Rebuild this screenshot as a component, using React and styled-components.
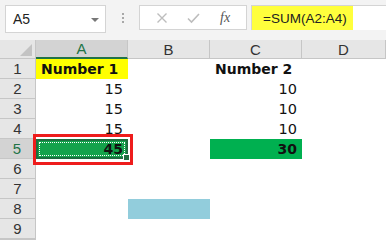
import React from 'react'
import styled, { createGlobalStyle, css } from 'styled-components'

const GlobalStyle = createGlobalStyle`
  body {
    margin: 0;
    background: #ffffff;
    font-family: "Liberation Sans", Arial, sans-serif;
  }
`

const Window = styled.div`
  width: 386px;
  height: 240px;
  overflow: hidden;
  background: #ffffff;
`

const FormulaBar = styled.div`
  display: flex;
  align-items: flex-start;
  height: 40px;
  padding: 5px 0 0 5px;
  box-sizing: border-box;
  background: #f3f3f3;
`

const NameBox = styled.div`
  display: flex;
  align-items: center;
  justify-content: space-between;
  width: 101px;
  height: 28px;
  box-sizing: border-box;
  padding: 0 6px 0 7px;
  background: #fff;
  border: 1px solid #d4d4d4;
  font-size: 14px;
  color: #222;
`

const DropArrow = styled.span`
  width: 0;
  height: 0;
  border-left: 4px solid transparent;
  border-right: 4px solid transparent;
  border-top: 4px solid #777;
  margin-top: 1px;
`

const Grip = styled.div`
  display: flex;
  flex-direction: column;
  gap: 2px;
  width: 33px;
  align-items: center;
  padding-top: 8px;

  span {
    width: 2px;
    height: 2px;
    background: #a8a8a8;
  }
`

const ButtonBox = styled.div`
  display: flex;
  align-items: center;
  justify-content: space-around;
  width: 108px;
  height: 25px;
  box-sizing: border-box;
  background: #fff;
  border: 1px solid #d4d4d4;
  padding: 0 6px;
`

const Fx = styled.span`
  font-family: "Liberation Serif", serif;
  font-style: italic;
  font-size: 14px;
  color: #555;
`

const FormulaInput = styled.div`
  flex: 1;
  height: 25px;
  margin-left: 4px;
  box-sizing: border-box;
  background: #fff;
  border-top: 1px solid #d4d4d4;
  border-left: 1px solid #d4d4d4;
  display: flex;
  align-items: stretch;
`

const FormulaText = styled.span`
  display: flex;
  align-items: center;
  background: #ffff3c;
  padding: 0 6px 0 11px;
  font-size: 13.5px;
  color: #222;
`

const Sheet = styled.div`
  display: grid;
  grid-template-columns: 36px 92px 82px 92px 1fr;
  grid-template-rows: 19px repeat(9, 20px) 1fr;
`

const Corner = styled.div`
  position: relative;
  background: #e6e6e6;
  border-right: 1px solid #c6c6c6;
  border-bottom: 1px solid #c6c6c6;
  box-sizing: border-box;

  &::after {
    content: '';
    position: absolute;
    right: 3px;
    bottom: 2px;
    border-left: 12px solid transparent;
    border-bottom: 12px solid #c3c3c3;
  }
`

const ColHead = styled.div`
  display: flex;
  align-items: center;
  justify-content: center;
  box-sizing: border-box;
  background: ${p => (p.$active ? '#d3d3d3' : '#e6e6e6')};
  color: ${p => (p.$active ? '#217346' : '#333')};
  border-right: 1px solid #c6c6c6;
  border-bottom: ${p => (p.$active ? '2px solid #217346' : '1px solid #c6c6c6')};
  font-size: 15px;
`

const RowHead = styled.div`
  display: flex;
  align-items: center;
  justify-content: center;
  box-sizing: border-box;
  background: ${p => (p.$active ? '#d3d3d3' : '#e6e6e6')};
  color: ${p => (p.$active ? '#217346' : '#333')};
  border-right: ${p => (p.$active ? '2px solid #217346' : '1px solid #c6c6c6')};
  border-bottom: 1px solid #c6c6c6;
  font-size: 15px;
`

const Cell = styled.div`
  position: relative;
  display: flex;
  align-items: center;
  justify-content: ${p => (p.$align === 'left' ? 'flex-start' : 'flex-end')};
  padding: 0 5px;
  box-sizing: border-box;
  background: ${p => p.$fill || 'transparent'};
  font-family: "DejaVu Sans", Verdana, sans-serif;
  font-size: 14.5px;
  font-weight: ${p => (p.$bold ? 700 : 400)};
  color: #111;

  ${p => p.$bold && css`
    font-size: 14px;
  `}
`

const SelectedCell = styled(Cell)`
  background: #14a24b;
  border: 2px solid #1e6e40;
  padding: 0 3px;

  &::before {
    content: '';
    position: absolute;
    inset: 1px;
    border: 1px dotted #ffffff;
  }

  &::after {
    content: '';
    position: absolute;
    right: -4px;
    bottom: -4px;
    width: 5px;
    height: 5px;
    background: #1e6e40;
    border: 1px solid #fff;
  }
`

const Callout = styled.div`
  position: absolute;
  left: -5px;
  top: -7px;
  right: -7px;
  bottom: -8px;
  border: 3px solid #ee1c1c;
  pointer-events: none;
`

const columns = ['A', 'B', 'C', 'D']

const rows = [
  { n: 1, a: 'Number 1', c: 'Number 2', bold: true, aFill: '#ffff00', alignA: 'left', alignC: 'left' },
  { n: 2, a: '15', c: '10' },
  { n: 3, a: '15', c: '10' },
  { n: 4, a: '15', c: '10' },
  { n: 5, a: '45', c: '30', bold: true, selected: true, cFill: '#00b050' },
  { n: 6 },
  { n: 7 },
  { n: 8, bFill: '#92cddc' },
  { n: 9 },
]

function CrossIcon() {
  return (
    <svg width="12" height="12" viewBox="0 0 12 12">
      <path d="M1.5 1.5 L10.5 10.5 M10.5 1.5 L1.5 10.5" stroke="#bdbdbd" strokeWidth="1.4" fill="none" />
    </svg>
  )
}

function CheckIcon() {
  return (
    <svg width="13" height="12" viewBox="0 0 13 12">
      <path d="M1 6.5 L4.5 10 L12 2" stroke="#bdbdbd" strokeWidth="1.6" fill="none" />
    </svg>
  )
}

export default function App() {
  return (
    <Window>
      <GlobalStyle />
      <FormulaBar>
        <NameBox>
          A5
          <DropArrow />
        </NameBox>
        <Grip>
          <span />
          <span />
          <span />
        </Grip>
        <ButtonBox>
          <CrossIcon />
          <CheckIcon />
          <Fx>fx</Fx>
        </ButtonBox>
        <FormulaInput>
          <FormulaText>=SUM(A2:A4)</FormulaText>
        </FormulaInput>
      </FormulaBar>

      <Sheet>
        <Corner />
        {columns.map(c => (
          <ColHead key={c} $active={c === 'A'}>{c}</ColHead>
        ))}

        {rows.map(r => (
          <React.Fragment key={r.n}>
            <RowHead $active={r.selected}>{r.n}</RowHead>
            {r.selected ? (
              <SelectedCell $bold={r.bold}>
                {r.a}
                <Callout />
              </SelectedCell>
            ) : (
              <Cell $bold={r.bold} $fill={r.aFill} $align={r.alignA}>{r.a}</Cell>
            )}
            <Cell $fill={r.bFill} />
            <Cell $bold={r.bold} $fill={r.cFill} $align={r.alignC}>{r.c}</Cell>
            <Cell />
          </React.Fragment>
        ))}
        <RowHead />
      </Sheet>
    </Window>
  )
}
